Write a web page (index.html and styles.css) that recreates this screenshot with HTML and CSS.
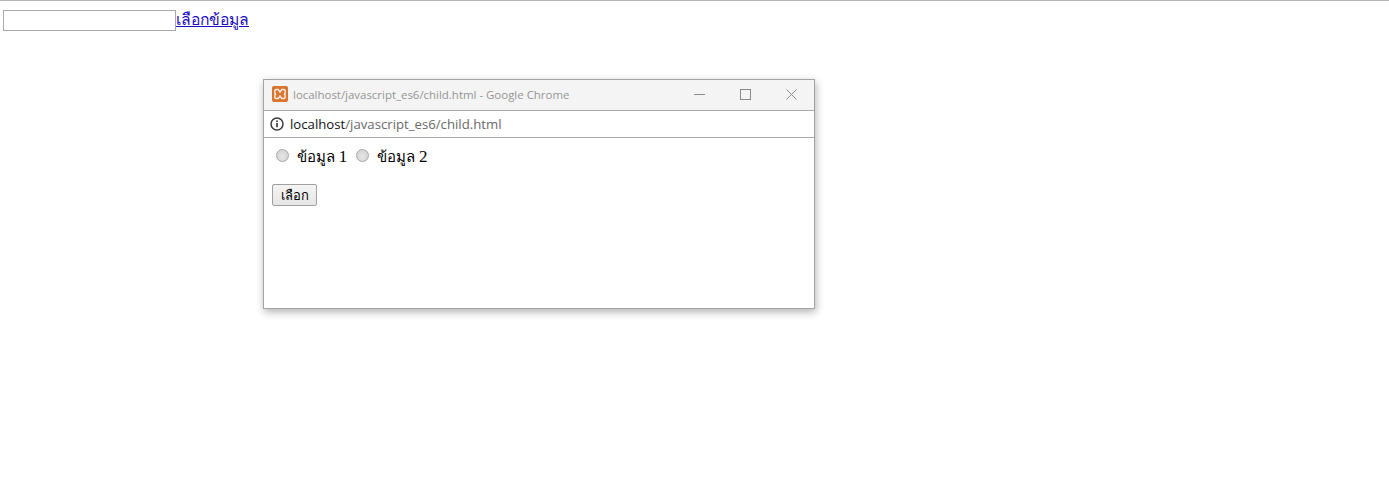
FILE: index.html
```html
<!DOCTYPE html>
<html lang="th">
<head>
<meta charset="utf-8">
<title>เลือกข้อมูล</title>
<link rel="stylesheet" href="styles.css">
</head>
<body>
<div class="topline"></div>
<div class="row"><input class="field" type="text"><a class="pick" href="#">เลือกข้อมูล</a></div>
<section class="popup">
  <header class="titlebar">
    <svg class="favicon" width="16" height="16" viewBox="0 0 16 16"><rect width="16" height="16" rx="2" fill="#d9752f"/><path d="M4 3.500h2.200L8 6l1.800-2.500H12c1 0 1.200 1 1.200 1.500v1.500c0 .8-.6 1.500-1.500 1.500.9 0 1.500.7 1.500 1.500V11c0 1-.7 1.500-1.500 1.500H9.800L8 10l-1.800 2.500H4c-.8 0-1.200-.7-1.200-1.500V9.500C2.800 8.700 3.400 8 4.300 8 3.400 8 2.800 7.300 2.800 6.500V5c0-.8.400-1.500 1.200-1.500Z" fill="none" stroke="#fbeadb" stroke-width="1.500"/></svg>
    <span class="wintitle">localhost/javascript_es6/child.html - Google Chrome</span>
    <div class="controls">
      <svg width="11" height="11" viewBox="0 0 11 11"><path d="M0 5.500h11" stroke="#8a8a8a" fill="none"/></svg>
      <svg width="11" height="11" viewBox="0 0 11 11"><rect x=".5" y=".5" width="10" height="10" stroke="#8a8a8a" fill="none"/></svg>
      <svg width="11" height="11" viewBox="0 0 11 11"><path d="M.5.500l10 10M10.500.500l-10 10" stroke="#8a8a8a" fill="none"/></svg>
    </div>
  </header>
  <div class="addressbar">
    <svg class="info" width="14" height="14" viewBox="0 0 14 14"><circle cx="7" cy="7" r="6" fill="none" stroke="#3c3c3c" stroke-width="1.500"/><path d="M7 6v4.200" stroke="#3c3c3c" stroke-width="1.700"/><circle cx="7" cy="4.200" r=".95" fill="#3c3c3c"/></svg>
    <span class="url"><span class="host">localhost</span>/javascript_es6/child.html</span>
  </div>
  <div class="content">
    <div class="options">
      <label class="option"><input class="radio" type="radio" name="d"><span class="optlabel">ข้อมูล <span class="num">1</span></span></label>
      <label class="option"><input class="radio" type="radio" name="d"><span class="optlabel">ข้อมูล <span class="num">2</span></span></label>
    </div>
    <button class="choose" type="button">เลือก</button>
  </div>
</section>
</body>
</html>
```
FILE: styles.css
```css
html, body { margin: 0; padding: 0; background: #fff; }
body { font-family: "Liberation Serif", "Noto Sans", serif; font-size: 16px; color: #000; height: 487px; overflow: hidden; }
.topline { height: 1px; background: #b4b4b4; }
.row { display: flex; align-items: flex-start; padding: 9px 0 0 3px; height: 24px; }
.field { box-sizing: border-box; width: 173px; height: 21px; margin: 0; padding: 1px 2px; border: 1px solid #a9a9a9; background: #fff; }
.pick { font-size: 15.700px; line-height: 20px; text-decoration: underline; color: #1a0dc0; }
.popup { position: absolute; left: 263px; top: 79px; width: 552px; height: 230px; box-sizing: border-box; border: 1px solid #a3a3a3; background: #fff; box-shadow: 1px 3px 8px rgba(0,0,0,.3); display: flex; flex-direction: column; }
.titlebar { height: 31px; box-sizing: border-box; background: #f4f4f4; border-bottom: 1px solid #a8a8a8; display: flex; align-items: center; padding: 0 0 2px 8px; }
.favicon { flex: none; margin-right: 5px; }
.wintitle { font-family: "Open Sans", sans-serif; font-size: 11.450px; color: #959595; }
.controls { margin-left: auto; display: flex; gap: 35px; padding-right: 17px; align-items: center; }
.addressbar { height: 27px; box-sizing: border-box; border-bottom: 1px solid #a8a8a8; display: flex; align-items: center; padding-left: 6px; }
.info { flex: none; margin-right: 6px; }
.url { font-family: "Open Sans", sans-serif; font-size: 13.200px; color: #6a6a6a; }
.host { color: #111; }
.content { padding: 8px 8px; }
.options { display: flex; height: 22px; align-items: center; }
.option { display: flex; align-items: center; margin-right: 5px; }
.optlabel { font-size: 15px; }
.num { font-size: 17px; font-family: "Liberation Serif", serif; }
.radio { appearance: none; box-sizing: border-box; width: 13px; height: 13px; margin: 0 8px 4px 4px; border: 1px solid #a6a6a6; border-radius: 50%; background: radial-gradient(circle at 50% 60%, #e6e6e6, #cfcfcf); }
.choose { display: block; margin-top: 16px; width: 45px; height: 22px; padding: 0; font-size: 13px; font-family: "Liberation Sans", "Noto Sans", sans-serif; background: linear-gradient(#f4f4f4, #e6e6e6); border: 1px solid #a0a0a0; border-radius: 2px; color: #000; }
```
